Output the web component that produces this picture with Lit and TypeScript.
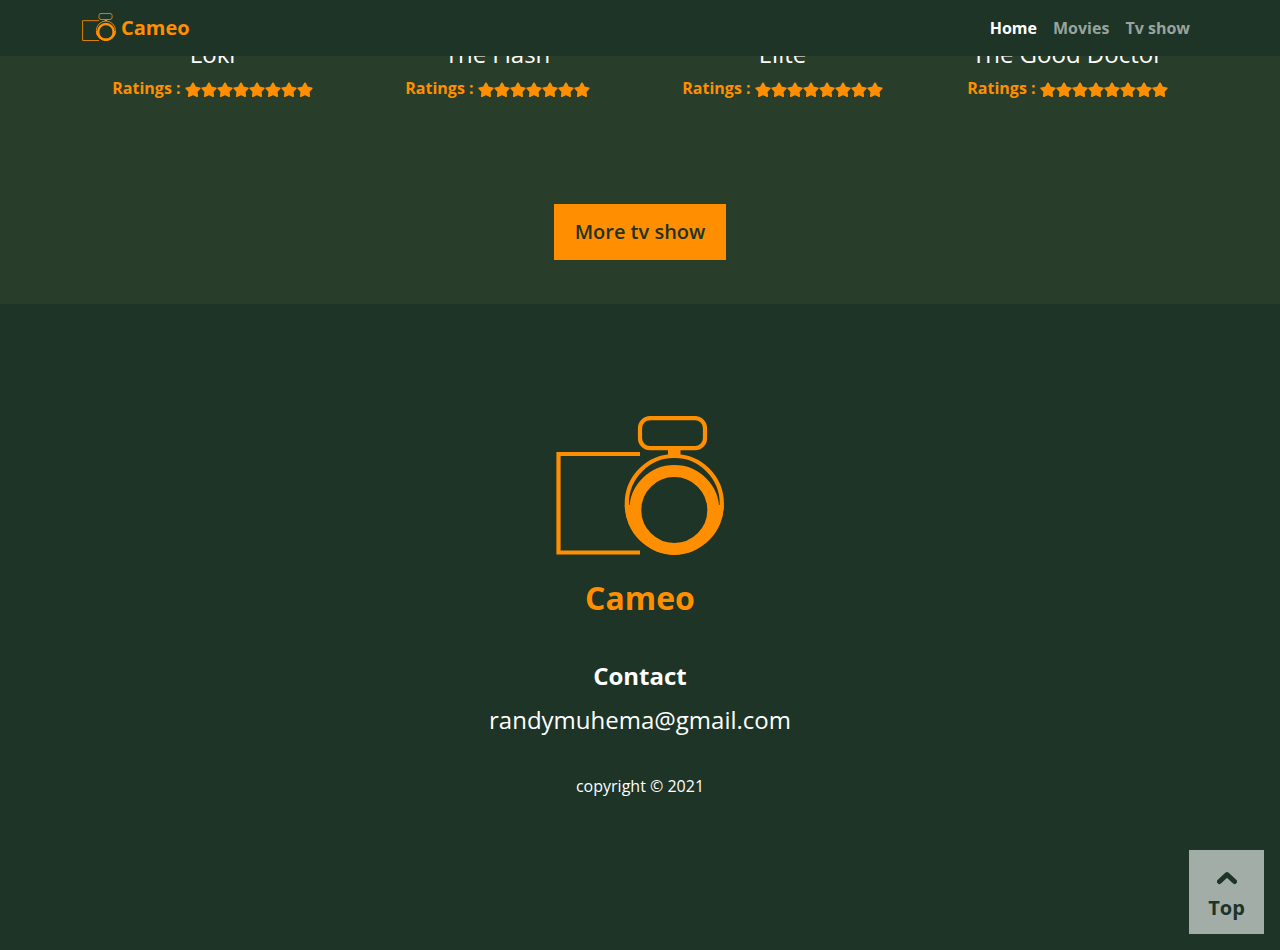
import { LitElement, html, css, svg } from "lit";
import { customElement } from "lit/decorators.js";

const shows = [
  { title: "Loki", stars: 8 },
  { title: "The Flash", stars: 7 },
  { title: "Elite", stars: 8 },
  { title: "The Good Doctor", stars: 8 },
];

const star = () => html`<svg class="star" viewBox="-7.500 -7.900 15 15" aria-hidden="true">
  <path d="M0-6.700L2.120-2.910L6.370-2.070L3.420 1.110L3.940 5.420L0 3.600L-3.940 5.420L-3.420 1.110L-6.370-2.070L-2.120-2.910Z" />
</svg>`;

const logoShapes = svg`
  <path class="line" d="M84 38H2.500V136.500H84" />
  <rect class="line" x="84" y="2.200" width="65" height="30" rx="10" />
  <rect class="solid" x="112" y="34" width="12.500" height="6" />
  <circle class="line" cx="118.300" cy="87.500" r="47.500" />
  <path class="solid" d="M68.800 89A49.500 49.500 0 0 0 167.800 89Z" />
  <circle class="hole" cx="118.300" cy="94" r="34" />
  <circle class="ring" cx="118.300" cy="94" r="39" />
`;

@customElement("app-root")
export class AppRoot extends LitElement {
  static styles = css`
    :host {
      display: block;
      min-height: 100vh;
      background: #1d3427;
      color: #fff;
      font: 400 16px/24px "Open Sans", sans-serif;
    }
    a { color: inherit; text-decoration: none; }
    h2, h3, h4, p { margin: 0; }
    .bar {
      position: fixed;
      inset: 0 0 auto;
      z-index: 2;
      background: #1d3427;
    }
    .inner {
      max-width: 1116px;
      margin: 0 auto;
      height: 56px;
      display: flex;
      align-items: center;
      justify-content: space-between;
    }
    .brand {
      display: flex;
      align-items: center;
      gap: 5px;
      font-size: 20px;
      font-weight: 700;
      color: #ff8f00;
    }
    .links { display: flex; padding-right: 8px; gap: 16px; font-weight: 700; color: #99a39e; }
    .links .active { color: #fff; }
    .logo { display: block; fill: none; }
    .small { width: 34px; height: 28px; margin-bottom: 2px; }
    .large { width: 168px; height: 139px; }
    .line { stroke: #ff8f00; stroke-width: 4.2; }
    .ring { stroke: #ff8f00; stroke-width: 12; }
    .solid { fill: #ff8f00; }
    .hole { fill: #1d3427; }
    .shows {
      background: #283e2a;
      padding: 39px 0 44px;
      display: flex;
      flex-direction: column;
      align-items: center;
      gap: 104px;
    }
    .row {
      width: 100%;
      max-width: 1140px;
      display: grid;
      grid-template-columns: repeat(4, 1fr);
      text-align: center;
    }
    .title { font-size: 24px; line-height: 29px; font-weight: 400; margin-bottom: 8px; }
    .rating { color: #ff8f00; font-weight: 700; }
    .star {
      width: 16px;
      height: 16px;
      fill: #ff8f00;
      stroke: #ff8f00;
      stroke-width: 1.6;
      stroke-linejoin: round;
      vertical-align: -4px;
    }
    .more {
      border: 0;
      background: #ff8f00;
      color: #1d3427;
      font: 600 20px/24px "Open Sans", sans-serif;
      padding: 16px 21px;
    }
    .foot {
      display: flex;
      flex-direction: column;
      align-items: center;
      padding: 112px 16px 151px;
    }
    .name { font-size: 32px; line-height: 38px; font-weight: 700; color: #ff8f00; margin: 24px 0 41px; }
    .contact { font-size: 24px; line-height: 36px; font-weight: 700; margin-bottom: 8px; }
    .mail { font-size: 24px; line-height: 36px; margin-bottom: 36px; }
    .top {
      position: fixed;
      right: 16px;
      bottom: 16px;
      width: 75px;
      height: 84px;
      box-sizing: border-box;
      padding-top: 2px;
      background: #a3ada7;
      color: #1d3427;
      display: flex;
      flex-direction: column;
      align-items: center;
      justify-content: center;
      font-size: 20px;
      line-height: 30px;
      font-weight: 700;
    }
    .chevron { width: 20px; height: 30px; fill: none; stroke: #1d3427; stroke-width: 5; stroke-linecap: round; stroke-linejoin: round; }
  `;

  render() {
    return html`
      <header class="bar">
        <div class="inner">
          <a class="brand" href="#">
            <svg class="logo small" viewBox="0 0 168 139" aria-hidden="true">${logoShapes}</svg>
            Cameo
          </a>
          <nav class="links">
            <a class="active" href="#">Home</a>
            <a href="#">Movies</a>
            <a href="#">Tv show</a>
          </nav>
        </div>
      </header>
      <main class="shows">
        <div class="row">
          ${shows.map((s) => html`<article>
            <h3 class="title">${s.title}</h3>
            <p class="rating">Ratings : ${Array.from({ length: s.stars }, star)}</p>
          </article>`)}
        </div>
        <button class="more" type="button">More tv show</button>
      </main>
      <footer class="foot">
        <svg class="logo large" viewBox="0 0 168 139" aria-hidden="true">${logoShapes}</svg>
        <h2 class="name">Cameo</h2>
        <h4 class="contact">Contact</h4>
        <a class="mail" href="mailto:randymuhema@gmail.com">randymuhema@gmail.com</a>
        <p>copyright © 2021</p>
      </footer>
      <a class="top" href="#">
        <svg class="chevron" viewBox="0 0 20 30" aria-hidden="true"><path d="M2.500 18.500L10 11.500L17.500 18.500" /></svg>
        Top
      </a>
    `;
  }
}
